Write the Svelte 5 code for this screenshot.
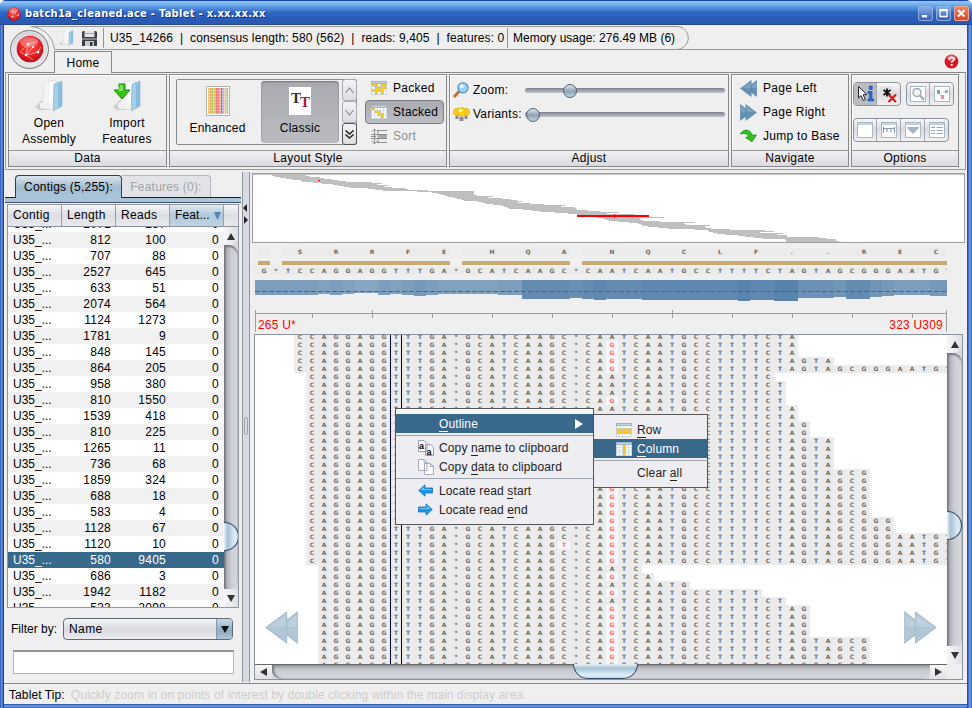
<script>
  const consensus = 'G*TCCAGGAGGTTTGA*GCATCAAGC*CAATCAATGCCTTTTCTAGTAGCGGGAATGT';

  const contigs = [
    [1071, 287], [812, 100], [707, 88], [2527, 645], [633, 51], [2074, 564],
    [1124, 1273], [1781, 9], [848, 145], [864, 205], [958, 380], [810, 1550],
    [1539, 418], [810, 225], [1265, 11], [736, 68], [1859, 324], [688, 18],
    [583, 4], [1128, 67], [1120, 10], [580, 9405], [686, 3], [1942, 1182], [533, 2098]
  ];

  // last visible column of every read, top to bottom
  const ends = [
    44, 44, 44, 47, 57, 42, 43, 43, 43, 44, 44, 45, 45, 47, 47, 47, 47,
    50, 50, 50, 50, 50, 50, 52, 52, 57, 57, 57, 57,
    31, 32, 35, 41, 43, 45, 45, 45, 45, 50, 50, 50, 50
  ];
  const startOf = (r) => (r < 5 ? 3 : r < 29 ? 4 : 5);
  const plainRows = new Set([0, 5, 6, 7, 9, 10, 29, 31, 33]);

  const reads = ends.map((end, r) => {
    const start = startOf(r);
    const cells = [];
    for (let c = start; c <= end; c++) {
      let ch = consensus[c];
      let variant = false;
      if (c === 29 && !plainRows.has(r)) { ch = 'G'; variant = true; }
      if (c === 25 && r === 26) { ch = 'T'; variant = true; }
      cells.push({ ch, variant });
    }
    return { start, cells };
  });

  const protein = { 3: 'S', 6: 'R', 9: 'R', 12: 'F', 15: 'E', 19: 'H', 22: 'Q', 25: 'A', 29: 'N', 32: 'Q', 35: 'C', 38: 'L', 41: 'F', 44: '.', 47: '.', 50: 'R', 53: 'E', 56: 'C' };
  const gapCols = [1, 16, 26];
  const columns = Array.from(consensus, (ch, i) => ({ ch, aa: protein[i] ?? '', gap: gapCols.includes(i) }));

  const coverageRuns = [
    [5, 15], [1, 14], [1, 15], [1, 14], [2, 13], [1, 15], [1, 14], [1, 15], [1, 16], [1, 15],
    [5, 14], [2, 15], [4, 19], [1, 18], [1, 19], [1, 20], [3, 19], [8, 20], [1, 21], [2, 20],
    [2, 21], [3, 18], [1, 17], [2, 19], [1, 17], [1, 16], [3, 15], [2, 16]
  ];
  const coverage = coverageRuns.flatMap(([n, h]) => Array(n).fill(h));
  const shade = (h) => {
    const t = (h - 13) / 8;
    return `rgb(${Math.round(136 - 48 * t)},${Math.round(165 - 33 * t)},${Math.round(193 - 21 * t)})`;
  };

  // [left, right] of the overview band, one pair per pixel line
  const band = [
    [272,306],[275,310],[280,320],[286,324],[292,332],[301,338],[302,346],[313,372],[322,382],[333,377],
    [338,388],[344,384],[350,392],[368,405],[375,408],[383,428],[417,474],[432,474],[437,474],[441,474],
    [445,477],[448,493],[453,488],[457,502],[461,511],[464,517],[478,522],[482,518],[486,530],[493,544],
    [501,565],[504,561],[507,575],[509,576],[523,577],[532,588],[540,600],[555,619],[568,607],[577,635],
    [585,649],[590,649],[597,664],[603,641],[606,640],[609,643],[618,660],[629,695],[638,684],[641,686],
    [643,710],[648,705],[658,706],[668,711],[695,730],[708,765],[709,774],[713,760],[717,783],[725,777],
    [738,787],[745,787],[754,819],[763,827],[785,836],[786,836],[786,839]
  ];

  const stripes = ['#f0c060', '#e8a050', '#8fc860', '#e8c060', '#e87070', '#e86878', '#f0a060', '#7070e8', '#e8a0c0', '#f0c060', '#98c878'];
</script>

{#snippet grid(cells)}
  <svg width="16" height="14" viewBox="0 0 16 14">
    <rect width="16" height="14" fill="#c3d0db" />
    <rect x="0" y="0" width="16" height="3" fill="#9fb7c9" />
    <rect x="1" y="1" width="14" height="1" fill="#c4d5e0" />
    {#each [0, 1, 2, 3] as r}
      {#each [0, 1, 2, 3, 4] as c}
        <rect x={1 + c * 3} y={3 + r * 2.7} width="2.3" height="2.1" fill={cells[r][c] === '1' ? '#ffc400' : '#fff'} />
      {/each}
    {/each}
  </svg>
{/snippet}

{#snippet doubleArrow(size, right, pale)}
  <svg width={size} height={size} viewBox="0 0 32 32">
    <g transform={right ? 'translate(32 0) scale(-1 1)' : ''} fill={pale ? '#b1c7d8' : '#6492b5'} stroke={pale ? '#a5bccd' : '#4f7c9f'} stroke-width="1">
      <path d="M31.3 1V31L12 16Z" />
      <path d="M21 1V31L1 16Z" />
      <path d="M20 4V15H4Z" fill="#fff" fill-opacity=".16" stroke="none" />
      <path d="M30.5 4V15H22V11Z" fill="#fff" fill-opacity=".16" stroke="none" />
    </g>
  </svg>
{/snippet}

{#snippet folder(w, h, arrow)}
  <svg width={w} height={h} viewBox="0 0 30 32">
    <path d="M1 27L8 20H20V30H5Z" fill="#b0b2b5" opacity=".55" />
    <path d="M10 3L19 1V26L8 29Z" fill="#f4f5f6" stroke="#d5d8da" stroke-width=".6" />
    <path d="M15 2L23 1V27L14 26Z" fill="#fff" stroke="#dde" stroke-width=".5" />
    <path d="M20 4L28 1V26L19 31Z" fill="#a5cde6" stroke="#7eb0d2" stroke-width=".6" />
    <path d="M24 4L28 2V26L24 28Z" fill="#7db6dc" opacity=".7" />
    <path d="M6 23L16 22L19 25V30L6 28Z" fill="#f0f1f2" />
    {#if arrow}
      <path d="M7 4H13V10H18L10 19L2 10H7Z" fill="#35c416" stroke="#1d8a0a" stroke-width="1" />
      <path d="M8 5H11V11H6Z" fill="#9af07c" opacity=".7" />
    {/if}
  </svg>
{/snippet}

{#snippet orb(size)}
  <svg width={size} height={size} viewBox="0 0 28 28">
    <defs>
      <radialGradient id="orb{size}" cx=".5" cy=".35" r=".65">
        <stop offset="0" stop-color="#ff5a50" /><stop offset=".7" stop-color="#e01820" /><stop offset="1" stop-color="#b80c14" />
      </radialGradient>
    </defs>
    <circle cx="14" cy="14" r="13.3" fill="url(#orb{size})" />
    <ellipse cx="13" cy="7" rx="9" ry="5" fill="#fff" opacity=".28" />
    <path d="M4 17L12 9L22 6M12 9L10 20L22 17L25 12M10 20L17 12M4 17L10 20L17 25" fill="none" stroke="#ffd8d4" stroke-width=".8" opacity=".8" />
    <g fill="#fff"><circle cx="12" cy="9" r="1.3" /><circle cx="10" cy="20" r="1.3" /><circle cx="22" cy="17" r="1.4" /><circle cx="17" cy="12" r="1.1" /></g>
  </svg>
{/snippet}

<div class="window">
  <header class="titlebar">
    <span class="app-icon">{@render orb(14)}</span>
    <span class="title">batch1a_cleaned.ace - Tablet - x.xx.xx.xx</span>
    <span class="wbtn"><svg width="15" height="15"><rect x="4" y="9" width="5" height="2.4" fill="#fff" /></svg></span>
    <span class="wbtn"><svg width="15" height="15"><path d="M4 4.5H11V10.5H4Z" fill="none" stroke="#fff" stroke-width="1.3" /><path d="M3.4 4H11.6" stroke="#fff" stroke-width="2" /></svg></span>
    <span class="wbtn close"><svg width="15" height="15"><path d="M4 4L10.5 10.5M10.5 4L4 10.5" stroke="#fff" stroke-width="2" /></svg></span>
  </header>

  <div class="body">
    <svg class="frame" width="963" height="50">
      <path d="M27 1.5C40 2.5 49 12 50.5 24.5H962" fill="none" stroke="#9a9a9a" />
      <path d="M27 1.5H673C688 3 688 23 673 24.5" fill="none" stroke="#9a9a9a" />
    </svg>
    <div class="orb-button">{@render orb(28)}</div>
    <div class="taskbar">
      {@render folder(15, 16, false)}
      <svg class="disk" width="15" height="15" viewBox="0 0 15 15">
        <path d="M1 0H14L15 1V15H0V1Z" fill="#3c3f42" /><rect x="2.5" y="0" width="10" height="6" fill="#e2e4e6" /><rect x="2.5" y="2" width="10" height="1" fill="#a4a6aa" />
        <rect x="0" y="7" width="15" height="2" fill="#7f8388" /><rect x="3" y="10" width="9" height="5" fill="#c9ccd0" /><rect x="8" y="11" width="2.5" height="4" fill="#33363a" />
      </svg>
      <span class="info">U35_14266&nbsp; |&nbsp; consensus length: 580 (562)&nbsp; |&nbsp; reads: 9,405&nbsp; |&nbsp; features: 0</span>
      <span class="info memory">Memory usage: 276.49 MB (6)</span>
    </div>

    <div class="ribbon-tabs">
      <span class="home">Home</span>
      <svg class="help" width="15" height="15" viewBox="0 0 15 15">
        <circle cx="7.5" cy="7.5" r="6.9" fill="#dc1420" /><ellipse cx="7.5" cy="4" rx="5" ry="3" fill="#fff" opacity=".3" />
        <path d="M5.2 5.7Q5.3 3.4 7.6 3.4T9.9 5.4Q9.9 6.7 8.4 7.3Q7.6 7.7 7.6 8.8" fill="none" stroke="#fff" stroke-width="1.7" /><rect x="6.7" y="10" width="1.9" height="1.9" fill="#fff" />
      </svg>
    </div>

    <div class="ribbon">
      <section class="group data">
        <div class="content">
          <div class="big">{@render folder(30, 32, false)}<span class="open">Open<br />Assembly</span></div>
          <div class="big">{@render folder(30, 32, true)}<span>Import<br />Features</span></div>
        </div>
        <footer>Data</footer>
      </section>

      <section class="group layout">
        <div class="content">
          <div class="gallery">
            <div class="style">
              <svg width="24" height="30" viewBox="0 0 24 30">
                <rect x=".5" y=".5" width="23" height="29" fill="#fff" stroke="#b2b2b2" />
                {#each stripes as color, i}<rect x={2 + i * 1.85} y="2" width="1.6" height="26" fill={color} />{/each}
                {#each Array(9) as _, i}<rect x="2" y={4 + i * 2.9} width="20" height=".8" fill="#fff" opacity=".4" />{/each}
              </svg>
              <span>Enhanced</span>
            </div>
            <div class="style selected">
              <span class="tt"><b>T</b><b class="red">T</b></span>
              <span>Classic</span>
            </div>
            <div class="steps">
              <span><svg width="9" height="7"><path d="M.5 6L4.5 1L8.5 6" fill="none" stroke="#8b9096" stroke-width="1.2" /></svg></span>
              <span><svg width="9" height="7"><path d="M.5 1L4.5 6L8.5 1" fill="none" stroke="#8b9096" stroke-width="1.2" /></svg></span>
              <span class="dark"><svg width="9" height="9"><path d="M.5 .5L4.5 4L8.5 .5M.5 4.5L4.5 8L8.5 4.5" fill="none" stroke="#222" stroke-width="1.5" /></svg></span>
            </div>
          </div>
          <div class="modes">
            <span>{@render grid(['11011', '01111', '11110', '01010'])}Packed</span>
            <span class="on">{@render grid(['10000', '01100', '00110', '00010'])}Stacked</span>
            <span class="off">
              <svg width="16" height="15"><path d="M3.5 0V15M1 2.5L3.5 0L6 2.5M1 12L3.5 15L6 12M0 5.5H16M0 9.5H16M6 1.5H16M6 13.5H16M7 2V14M0 7.5H5" fill="none" stroke="#909090" /><rect x="8" y="6" width="8" height="3" fill="#a8a8a8" /></svg>Sort
            </span>
          </div>
        </div>
        <footer>Layout Style</footer>
      </section>

      <section class="group adjust">
        <div class="content">
          <div class="slide">
            <svg width="16" height="16" viewBox="0 0 16 16"><path d="M1 15L6 9.5" stroke="#b4742c" stroke-width="2.8" /><circle cx="10" cy="5.8" r="5" fill="#9bd4f5" stroke="#4d8cc0" stroke-width="1.2" /><circle cx="8.6" cy="4.2" r="2.1" fill="#e4f6ff" /></svg>
            <span>Zoom:</span><i><em></em></i>
          </div>
          <div class="slide second">
            <svg width="17" height="15" viewBox="0 0 17 15"><g fill="#fcd21c" stroke="#d9a200" stroke-width=".7"><circle cx="4" cy="5" r="3.6" /><circle cx="13" cy="5" r="3.6" /><circle cx="8.5" cy="5" r="4.3" /></g><ellipse cx="7.5" cy="3.4" rx="2" ry="1.6" fill="#fff6b0" /><g fill="#8c8c8c"><rect x="2.5" y="9" width="3" height="3" /><rect x="11.5" y="9" width="3" height="3" /><rect x="6.5" y="10" width="4" height="4" /></g></svg>
            <span>Variants:</span><i><em></em></i>
          </div>
        </div>
        <footer>Adjust</footer>
      </section>

      <section class="group nav">
        <div class="content">
          <span>{@render doubleArrow(17, false, false)}Page Left</span>
          <span>{@render doubleArrow(17, true, false)}Page Right</span>
          <span><svg width="17" height="14" viewBox="0 0 17 14"><path d="M0 5Q5-1.5 10 2.5L12.5 6H16.5L12 12.8L5.5 8.5L9 7.5Q6 3 0 5Z" fill="#2fc11c" stroke="#14860c" stroke-width=".7" /></svg>Jump to Base</span>
        </div>
        <footer>Navigate</footer>
      </section>

      <section class="group options">
        <div class="content">
          <div class="opt-row">
            <div class="seg">
              <span class="down"><svg width="19" height="18" viewBox="0 0 19 18"><path d="M2.5 1.5V13L5.2 10.5L7.3 15.5L9.3 14.5L7.2 9.7H11Z" fill="#fff" stroke="#222" /><path d="M12 6.5H16V14H17.5V16H12V14H13.5V8.5H12ZM13.3 1H16.2V4.4H13.3Z" fill="#2c6ee0" stroke="#143f9c" stroke-width=".6" /></svg></span>
              <span><svg width="17" height="17" viewBox="0 0 17 17"><rect x=".5" y=".5" width="12" height="13" fill="#e0e0e0" /><path d="M7 2.5V10.5M3.5 4L10.5 9M10.5 4L3.5 9" stroke="#111" stroke-width="1.8" /><path d="M8.5 8.5L16 16M16 8.5L8.5 16" stroke="#d81a10" stroke-width="2.2" /></svg></span>
            </div>
            <div class="seg">
              <span><svg width="16" height="16"><rect x=".5" y=".5" width="15" height="15" fill="#fff" stroke="#aab8c6" /><circle cx="7" cy="6.5" r="4" fill="#eef3f6" stroke="#98a4ae" stroke-width="1.3" /><path d="M10 9.5L14 14" stroke="#98a4ae" stroke-width="2" /></svg></span>
              <span><svg width="16" height="16"><rect x=".5" y=".5" width="15" height="15" fill="#fff" stroke="#aab8c6" /><path d="M4 5L8 11M9 6H12" stroke="#bbb" /><rect x="3" y="4" width="3" height="4" fill="#58b878" /><rect x="11" y="4" width="3" height="3" fill="#8fb8b8" /><rect x="7" y="9" width="3" height="4" fill="#e090a0" /></svg></span>
            </div>
          </div>
          <div class="opt-row">
            <div class="seg">
              {#each [0, 1, 2, 3] as k}
                <span><svg width="16" height="16"><rect x=".5" y=".5" width="15" height="15" fill="#fff" stroke="#aab8c6" /><rect x="1" y="1" width="14" height="2" fill="#c6d3df" />
                  {#if k === 1}<path d="M2 6.5H14M2.5 5V11M13.5 5V11M6 7V10M10 7V10" stroke="#8a9aa8" stroke-width="1.2" />{/if}
                  {#if k === 2}<path d="M2 5H14V6L8 12L2 6Z" fill="#a5b5c2" />{/if}
                  {#if k === 3}<path d="M2 5.5H6M2 8.5H6M2 11.5H6M7.5 5.5H14M7.5 8.5H14M7.5 11.5H14" stroke="#9aa6b2" stroke-width="1.2" />{/if}
                </svg></span>
              {/each}
            </div>
          </div>
        </div>
        <footer>Options</footer>
      </section>
    </div>

    <div class="main">
      <aside>
        <div class="side-tabs"><span class="active">Contigs (5,255):</span><span>Features (0):</span></div>
        <div class="tab-line"></div>
        <div class="table">
          <div class="thead"><span>Contig</span><span>Length</span><span>Reads</span><span class="sorted">Feat...<svg width="7" height="8"><path d="M0 0H7L3.5 8Z" fill="#5585b5" /></svg></span><span></span></div>
          <div class="tbody">
            <div class="rows">
              {#each contigs as [length, count]}
                <div class="row" class:sel={count === 9405}><span>U35_...</span><span>{length}</span><span>{count}</span><span>0</span></div>
              {/each}
            </div>
            <div class="vscroll"><b class="up"></b><div class="vtrack"><i class="vthumb"></i></div><b class="dn"></b></div>
          </div>
        </div>
        <div class="filter"><span>Filter by:</span><div class="combo"><span>Name</span><b></b></div></div>
        <div class="field"></div>
      </aside>

      <div class="splitter"><b class="l"></b><b class="r"></b><i></i></div>

      <div class="view">
        <svg class="overview" width="713" height="70" viewBox="252 173 713 70">
          <rect x="252.5" y="173.5" width="712" height="69" fill="#fff" stroke="#a0a0a0" />
          <rect x="253" y="174" width="711" height="1" fill="#c4c4c4" />
          {#each band as [x1, x2], i}<rect x={x1} y={175 + i} width={x2 - x1} height="1" fill="#bfbfbf" />{/each}
          <rect x="577" y="215" width="72" height="2" fill="#f00" /><rect x="614" y="214" width="1" height="4" fill="#f00" /><rect x="318" y="180" width="2" height="1" fill="#f00" />
        </svg>

        <div class="tracks">
          <div class="seq protein">{#each columns as c}<span class:gap={c.gap} class:stop={c.aa === '.'}>{c.aa}</span>{/each}</div>
          <div class="seq bars">{#each columns as c}<span class:gap={c.gap}></span>{/each}</div>
          <div class="seq cons">{#each columns as c}<span>{c.ch}</span>{/each}</div>
          <svg class="coverage" width="692" height="22">
            {#each coverage as h, i}<rect x={i ? 3 + i * 12 : 0} y="0" width={i ? 12 : 15} height={h} fill={shade(h)} shape-rendering="crispEdges" />{/each}
            <path d="M0 11.5H692" stroke="#3869a2" stroke-dasharray="5 2" />
          </svg>
          <svg class="ruler" width="692" height="22" fill="none" stroke="#9c9c9c">
            <path d="M.5 0V22M691.5 0V22M0 3.5H692M57.5 3V8M117.5 0V8M177.5 3V8M237.5 3V8M297.5 3V8M357.5 3V8M417.5 0V8M477.5 3V8M537.5 3V8M597.5 3V8M657.5 3V8" />
          </svg>
          <div class="labels"><span>265 U*</span><span>323 U309</span></div>
        </div>

        <div class="pane">
          <div class="upper">
            <div class="reads">
              <div class="stack">
                {#each reads as read}
                  <div class="seq read" style:margin-left="{read.start * 12 + 3}px">{#each read.cells as cell}<span class:variant={cell.variant}>{cell.ch}</span>{/each}</div>
                {/each}
              </div>
              <div class="outline"></div>
              <div class="jump left">{@render doubleArrow(33, false, true)}</div>
              <div class="jump right">{@render doubleArrow(33, true, true)}</div>
            </div>
            <div class="vscroll big-scroll"><b class="up"></b><div class="vtrack"><i class="vthumb"></i></div><b class="dn"></b></div>
          </div>
          <div class="hscroll"><b class="lf"></b><div class="htrack"><i></i></div><b class="rt"></b></div>
        </div>
      </div>
    </div>

    <div class="status"><span>Tablet Tip:</span><span class="tip">Quickly zoom in on points of interest by double clicking within the main display area</span></div>
  </div>

  <div class="menu context">
    <div class="item hot"><span class="ic"></span><span><u>O</u>utline</span><svg class="more" width="8" height="10"><path d="M0 0L8 5L0 10Z" fill="#fff" /></svg></div>
    <hr />
    <div class="item"><span class="ic"><svg width="16" height="16"><path d="M.5 .5H6L9 3.5V11.5H.5ZM7.5 4.5H12.5L15.5 7.5V15.5H7.5Z" fill="#fafaff" stroke="#9a9ab8" /><text x="1" y="8.5" font-size="9" font-weight="bold">a</text><text x="8.5" y="14.5" font-size="9" font-weight="bold">a</text></svg></span><span>Copy <u>n</u>ame to clipboard</span></div>
    <div class="item"><span class="ic"><svg width="16" height="16"><path d="M.5 .5H6L9 3.5V11.5H.5ZM6.5 4.5H12.5L15.5 7.5V15.5H6.5Z" fill="#fafaff" stroke="#a9a9c6" /><path d="M6 .5V3.5H9M12.5 4.5V7.5H15.5" fill="none" stroke="#a9a9c6" /></svg></span><span>Copy <u>d</u>ata to clipboard</span></div>
    <hr />
    <div class="item"><span class="ic"><svg width="15" height="13"><path d="M.7 6.5L7 .8V4H14.5V9H7V12.2Z" fill="#1e97e8" stroke="#0b62ac" stroke-width=".7" /><path d="M2.5 6L6.2 2.8V5H13.5V6Z" fill="#6fc4fa" /></svg></span><span>Locate read <u>s</u>tart</span></div>
    <div class="item"><span class="ic"><svg width="15" height="13"><path d="M14.3 6.5L8 .8V4H.5V9H8V12.2Z" fill="#1e97e8" stroke="#0b62ac" stroke-width=".7" /><path d="M12.5 6L8.8 2.8V5H1.5V6Z" fill="#6fc4fa" /></svg></span><span>Locate read <u>e</u>nd</span></div>
  </div>

  <div class="menu sub">
    <div class="item"><span class="ic">{@render grid(['00000', '11111', '11111', '00000'])}</span><span><u>R</u>ow</span></div>
    <div class="item hot"><span class="ic">{@render grid(['00100', '00100', '00100', '00100'])}</span><span><u>C</u>olumn</span></div>
    <hr />
    <div class="item"><span class="ic"></span><span>Clear <u>a</u>ll</span></div>
  </div>
</div>

<style>
  :global(body) { margin: 0; background: #fff; }
  .window, .window * { box-sizing: border-box; }
  svg { display: block; flex: none; }
  .window {
    position: relative; width: 972px; height: 708px; display: flex; flex-direction: column; overflow: hidden;
    padding: 0 5px 4px 4px; border-radius: 6px 6px 0 0;
    background: linear-gradient(90deg, #2c56b4 0, #4677cf 1px, #7ba5e3 2px, #1d44a2 3px, #1d44a2 4px, transparent 4px, transparent 967px, #1d3f9d 967px, #2f5bb8 968px, #7ba5e3 970px, #2c56b4 972px),
      linear-gradient(#3a66c0 704px, #1c42a4 704px, #7ba3e2 706px, #3460ba 708px);
    font: 12px/16px "Liberation Sans", Arial, sans-serif; letter-spacing: 0.27px; color: #000; white-space: nowrap;
  }
  .titlebar {
    height: 25px; margin: 0 -5px 0 -4px; padding: 2px 3px 0 7px; display: flex; align-items: center; flex: none;
    background: linear-gradient(#1843a8 0, #1843a8 1px, #90c8f6 1px, #78b4ec 4px, #4a86d8 9px, #3068c4 12px, #2a5cb8 18px, #2c58b0 24px, #18388c 25px);
  }
  .app-icon { width: 18px; }
  .title { flex: 1; color: #fff; font: bold 11px/16px "DejaVu Sans Condensed", "DejaVu Sans", sans-serif; letter-spacing: .3px; text-shadow: 1px 1px #103078; }
  .wbtn { width: 15px; height: 15px; margin-left: 3px; border-radius: 3px; background: linear-gradient(#8cb4ec, #2c58b4); box-shadow: inset 0 0 0 1px #8cb0e4; }
  .wbtn.close { background: linear-gradient(#f08868, #d84020); box-shadow: inset 0 0 0 1px #f0a890; }

  .body { position: relative; height: 679px; flex: none; display: flex; flex-direction: column; background: #efefef; }
  .frame { position: absolute; left: 0; top: 0; }
  .orb-button {
    position: absolute; left: 6px; top: 5px; width: 39px; height: 39px; border-radius: 50%; border: 1px solid #777;
    background: radial-gradient(circle at 50% 60%, #fff, #dcdde2 60%, #b9bbc4); box-shadow: inset 0 0 0 1px #e8e8ec; display: flex; justify-content: center; padding-top: 4px; z-index: 2;
  }
  .taskbar { height: 26px; padding-left: 55px; display: flex; align-items: center; flex: none; }
  .disk { margin-left: 8px; }
  .info { margin-left: 6px; padding-left: 6px; border-left: 1px solid #8f959f; height: 20px; line-height: 21px; width: 398px; letter-spacing: 0.11px; }
  .info.memory { margin-left: 6px; padding-left: 5px; width: 180px; letter-spacing: 0; }
  .ribbon-tabs { height: 21px; flex: none; display: flex; justify-content: space-between; padding: 0 8px 0 50px; }
  .home { width: 58px; height: 22px; border: 1px solid #888; border-bottom: 0; background: #f0f0f0; text-align: center; line-height: 22px; position: relative; z-index: 1; }
  .help { margin-top: 3px; }

  .ribbon { height: 98px; margin: 0 1px; flex: none; display: flex; gap: 2px; padding: 1px 2px 2px; border: 1px solid #999; border-top-color: #888; width: 961px; }
  .group { border: 1px solid #888; height: 93px; display: flex; flex-direction: column; box-shadow: inset 1px 1px #fff; flex: none; }
  .group .content { flex: 1; display: flex; min-height: 0; }
  .group footer { height: 16px; flex: none; border-top: 1px solid #999; background: linear-gradient(#f0f0f2, #dadbe1); text-align: center; line-height: 15px; }
  .data { width: 159px; }
  .big { width: 78px; display: flex; flex-direction: column; align-items: center; text-align: center; padding-top: 5px; padding-left: 2px; }
  .big span { margin-top: 3px; }
  .layout { width: 278px; }
  .gallery { width: 181px; height: 66px; margin: 4px 0 0 6px; border: 1px solid #8b8b8b; border-radius: 2px; display: flex; }
  .style { width: 81px; display: flex; flex-direction: column; align-items: center; padding-top: 6px; }
  .style span:last-child { margin-top: 4px; }
  .selected { width: 78px; height: 62px; margin: 1px 0 0 3px; border-radius: 4px; background: linear-gradient(#a9abb1, #babcc2); box-shadow: inset 0 1px 2px #707278; padding-top: 6px; }
  .selected span:last-child { margin-top: 5px; }
  .tt { width: 22px; height: 28px; background: #fff; font: bold 15px/15px "Liberation Serif", serif; letter-spacing: -1px; color: #333; padding: 4px 0 0 2px; display: flex; }
  .tt b { line-height: 15px; }
  .tt .red { color: #a82028; padding-top: 4px; }
  .steps { width: 15px; margin: -1px -1px -1px auto; display: flex; flex-direction: column; }
  .steps span { flex: 1; border: 1px solid #a9acb3; background: linear-gradient(#f4f4f6, #dcdde2); display: flex; align-items: center; justify-content: center; border-radius: 3px; }
  .steps .dark { border-color: #555; }
  .modes { margin-left: 8px; display: flex; flex-direction: column; padding-top: 1px; }
  .modes span { width: 79px; height: 24px; display: flex; align-items: center; gap: 6px; padding-left: 6px; }
  .modes .on { border: 1px solid #7a7c82; border-radius: 4px; background: linear-gradient(#a9abb1, #bcbec4); padding-left: 5px; }
  .modes .off { color: #909090; }
  .adjust { width: 280px; }
  .adjust .content { flex-direction: column; padding: 3px 3px 0; }
  .slide { height: 24px; display: flex; align-items: center; }
  .slide span { margin-left: 4px; width: 52px; }
  .slide.second span { margin-left: 3px; width: 52px; letter-spacing: .25px; }
  .slide i { position: relative; flex: 1; height: 5px; border-radius: 3px; background: linear-gradient(#7c818d, #c2c5cf); }
  .slide em { position: absolute; left: 38px; top: -4px; width: 14px; height: 14px; border: 1px solid #53616f; border-radius: 50%; background: linear-gradient(#dce3ea, #8da2b3 55%, #c6d6e0); }
  .slide.second em { left: 1px; }
  .nav { width: 118px; }
  .nav .content { flex-direction: column; padding: 1px 0 0 8px; }
  .nav .content span { height: 24px; display: flex; align-items: center; gap: 6px; }
  .options { width: 108px; }
  .options .content { flex-direction: column; padding-top: 7px; padding-left: 1px; gap: 12px; }
  .opt-row { display: flex; gap: 5px; }
  .seg { display: flex; border: 1px solid #8d929b; border-radius: 4px; background: linear-gradient(#f8f8fa, #dcdde3 50%, #f2f2f5); height: 24px; }
  .seg span { width: 23px; display: flex; align-items: center; justify-content: center; border-right: 1px solid #a4a8b0; }
  .seg span + span { width: 24px; }
  .seg span:last-child { width: 23px; border-right: 0; }
  .seg .down { background: #babcc3; border-radius: 3px 0 0 3px; }

  .main { height: 513px; flex: none; display: flex; }
  aside { width: 237px; display: flex; flex-direction: column; padding-left: 1px; }
  .side-tabs { height: 28px; padding: 5px 0 0 10px; display: flex; border-bottom: 1px solid #15202e; flex: none; }
  .side-tabs span { height: 22px; width: 89px; border: 1px solid #b4b7be; border-left: 0; border-bottom: 0; border-radius: 0 4px 0 0; color: #a2a4a8; line-height: 23px; text-align: center; letter-spacing: .2px; background: #e2e3e7; }
  .side-tabs .active { height: 23px; width: 107px; color: #000; border: 1px solid #26415c; border-bottom: 0; border-radius: 4px 4px 0 0; background: linear-gradient(#dbe5ee, #a3bdd2 50%, #a9c3d8); margin-bottom: -1px; letter-spacing: .22px; }
  .tab-line { height: 5px; flex: none; background: #a9c3d9; border-bottom: 1px solid #40516a; }
  .table { margin: 1px 2px 0; height: 404px; border: 1px solid #9297a1; display: flex; flex-direction: column; flex: none; background: #fff; }
  .thead { height: 22px; flex: none; display: flex; border-bottom: 1px solid #8c919b; background: linear-gradient(#f6f6f8, #dcdee3 50%, #e8e9ed); }
  .thead span { width: 54px; flex: none; border-right: 1px solid #9ba0a8; padding-left: 5px; line-height: 21px; letter-spacing: .35px; display: flex; align-items: center; gap: 4px; }
  .thead .sorted { background: linear-gradient(#dfe8f0, #b0c8da 50%, #c0d4e2); letter-spacing: .1px; }
  .thead span:last-child { border: 0; width: 15px; padding: 0; }
  .tbody { display: flex; flex: 1; min-height: 0; overflow: hidden; }
  .rows { width: 216px; margin-top: -11px; height: 391px; flex: none; }
  .row { height: 16px; line-height: 17px; display: flex; letter-spacing: .25px; background: #fff; }
  .row:nth-child(even) { background: #f1f1f1; }
  .row span { width: 55px; text-align: right; }
  .row span:first-child { width: 48px; text-align: left; padding-left: 5px; letter-spacing: 0; }
  .row span:last-child { width: 53px; }
  .row.sel { background: #39698a; color: #fff; }

  .vscroll { width: 15px; display: flex; flex-direction: column; background: #d6d8de; }
  .vscroll b { height: 18px; display: flex; justify-content: center; align-items: center; background: linear-gradient(90deg, #f6f6f8, #dfe0e5); flex: none; }
  .vscroll .up::after, .vscroll .dn::after { content: ''; border: 4px solid transparent; border-top-width: 0; border-bottom: 7px solid #333; }
  .vscroll .dn::after { border-bottom-width: 0; border-top: 7px solid #333; }
  .vscroll .up { border-bottom-left-radius: 0; border-bottom-right-radius: 8px; }
  .vtrack { flex: 1; position: relative; background: linear-gradient(90deg, #6a6c72, #b0b2ba 3px, #cbcdd4 7px, #d9dae0); border-radius: 0 9px 9px 0; box-shadow: inset 0 2px 2px #77797f; }
  .vthumb { position: absolute; left: 0; top: 277px; width: 15px; height: 29px; border: 1px solid #2f4d68; border-left: 0; border-radius: 0 15px 15px 0; background: linear-gradient(90deg, #e8f2f8, #a9c2d4 25%, #e0eff8 80%, #c2d8e6); }
  .filter { display: flex; margin-top: 10px; align-items: center; height: 22px; padding-left: 6px; flex: none; letter-spacing: 0; }
  .combo { width: 170px; height: 22px; margin-left: auto; margin-right: 8px; border: 1px solid #5e6a78; border-radius: 4px; display: flex; justify-content: space-between; line-height: 21px; padding-left: 5px; background: linear-gradient(#f6f6f8, #d8dae0 50%, #ececf0); overflow: hidden; letter-spacing: .4px; }
  .combo b { width: 16px; background: linear-gradient(#c8d8e4, #8dabc2 60%, #adc6d8); display: flex; align-items: center; justify-content: center; border-left: 1px solid #8299ac; }
  .combo b::after { content: ''; border: 4px solid transparent; border-bottom: 0; border-top: 7px solid #111; }
  .field { height: 24px; width: 221px; margin: 10px 0 0 8px; border: 1px solid #b2b4b8; border-top: 2px solid #90929a; background: #fff; flex: none; }

  .splitter { width: 8px; margin: 2px 1px 0; height: 510px; background: #d9dbe3; border-left: 1px solid #8e939d; border-right: 1px solid #8e939d; position: relative; }
  .splitter b { position: absolute; left: 0; border: 4px solid transparent; }
  .splitter .l { top: 32px; border-left: 0; border-right-color: #222; }
  .splitter .r { top: 44px; left: 1px; border-right: 0; border-left-color: #222; }
  .splitter i { position: absolute; left: 1px; top: 245px; width: 4px; height: 18px; border: 1px solid #9ea3ae; border-radius: 2px; }

  .view { flex: 1; display: flex; flex-direction: column; padding: 3px 0 0 1px; min-width: 0; }
  .overview { shape-rendering: crispEdges; }
  .tracks { margin-left: 3px; width: 692px; height: 91px; display: flex; flex-direction: column; overflow: hidden; flex: none; }
  .seq { display: flex; height: 8px; flex: none; font: bold 6px/8px "DejaVu Sans", sans-serif; letter-spacing: 0; color: #6a6a6a; }
  .seq span { width: 12px; height: 8px; text-align: center; flex: none; background: #ebebeb; }
  .protein { margin: 5px 0 0 3px; }
  .protein .stop { color: #e06060; }
  .seq .gap { background: none; }
  .bars { height: 4px; margin: 5px 0 0 3px; }
  .bars span { height: 4px; background: #c8a971; }
  .cons { padding-left: 3px; margin-top: 2px; background: #ebebeb; }
  .coverage { margin-top: 5px; }
  .ruler { margin-top: 8px; shape-rendering: crispEdges; }
  .labels { display: flex; justify-content: space-between; padding: 0 4px 0 3px; color: #f00; margin-top: -15px; line-height: 16px; flex: none; letter-spacing: .2px; }

  .pane { margin-left: 2px; width: 709px; height: 346px; border: 1px solid #8c91a0; display: flex; flex-direction: column; background: #efefef; flex: none; }
  .upper { display: flex; height: 329px; flex: none; }
  .reads { position: relative; width: 692px; height: 329px; background: #fff; overflow: hidden; flex: none; }
  .stack { margin-top: -2px; }
  .variant { color: #ff6868; }
  .seq .variant { background: #f7f7f7; }
  .outline { position: absolute; left: 135px; top: 0; width: 12px; height: 329px; border: 1px solid #00005c; border-width: 0 1px; }
  .jump { position: absolute; top: 276px; left: 10px; }
  .jump.right { left: 649px; }
  .big-scroll .vthumb { top: 158px; }
  .hscroll { height: 15px; width: 692px; display: flex; border-top: 1px solid #666; background: #d6d8de; }
  .hscroll b { width: 17px; background: linear-gradient(#f6f6f8, #dfe0e5); display: flex; align-items: center; justify-content: center; }
  .hscroll b::after { content: ''; border: 4px solid transparent; border-left-width: 0; border-right: 7px solid #333; }
  .hscroll .rt::after { border-right-width: 0; border-left: 7px solid #333; }
  .htrack { flex: 1; position: relative; background: linear-gradient(#9b9da5, #c8cad1 5px, #d9dae0); border-radius: 0 0 9px 9px; box-shadow: inset 2px 0 2px #77797f; }
  .htrack i { position: absolute; left: 301px; top: -1px; width: 65px; height: 15px; border: 1px solid #2f4d68; border-top: 0; border-radius: 0 0 15px 15px; background: linear-gradient(#e8f2f8, #a9c2d4 30%, #e0f1fa 80%, #c2d8e6); }

  .status { height: 21px; flex: none; border-top: 1px solid #888; display: flex; gap: 6px; padding-left: 5px; line-height: 22px; letter-spacing: .1px; }
  .tip { color: #cdcdcd; letter-spacing: .12px; }

  .menu { position: absolute; background: #ededf2; border: 1px solid #555; color: #222; display: flex; flex-direction: column; z-index: 5; }
  .context { left: 395px; top: 408px; width: 199px; height: 117px; padding-top: 5px; box-shadow: inset 0 5px #f6f6f9; }
  .sub { left: 593px; top: 414px; width: 115px; height: 74px; padding-top: 5px; }
  .item { height: 19px; display: flex; align-items: center; position: relative; flex: none; padding-left: 22px; letter-spacing: .13px; }
  .ic { width: 21px; display: flex; }
  .item.hot { background: #39698a; color: #fff; }
  .more { margin-left: auto; margin-right: 10px; }
  hr { width: 100%; margin: 2px 0; height: 1px; flex: none; border: 0; background: #9ea4ae; }
  .context hr { margin: 2px 0; }
  .context hr:nth-of-type(2) { margin: 2px 0; }
  .sub hr { margin: 2px 0; }
  u { text-decoration: none; box-shadow: 0 1px 0 currentColor; line-height: 14px; display: inline-block; height: 14px; }
</style>
